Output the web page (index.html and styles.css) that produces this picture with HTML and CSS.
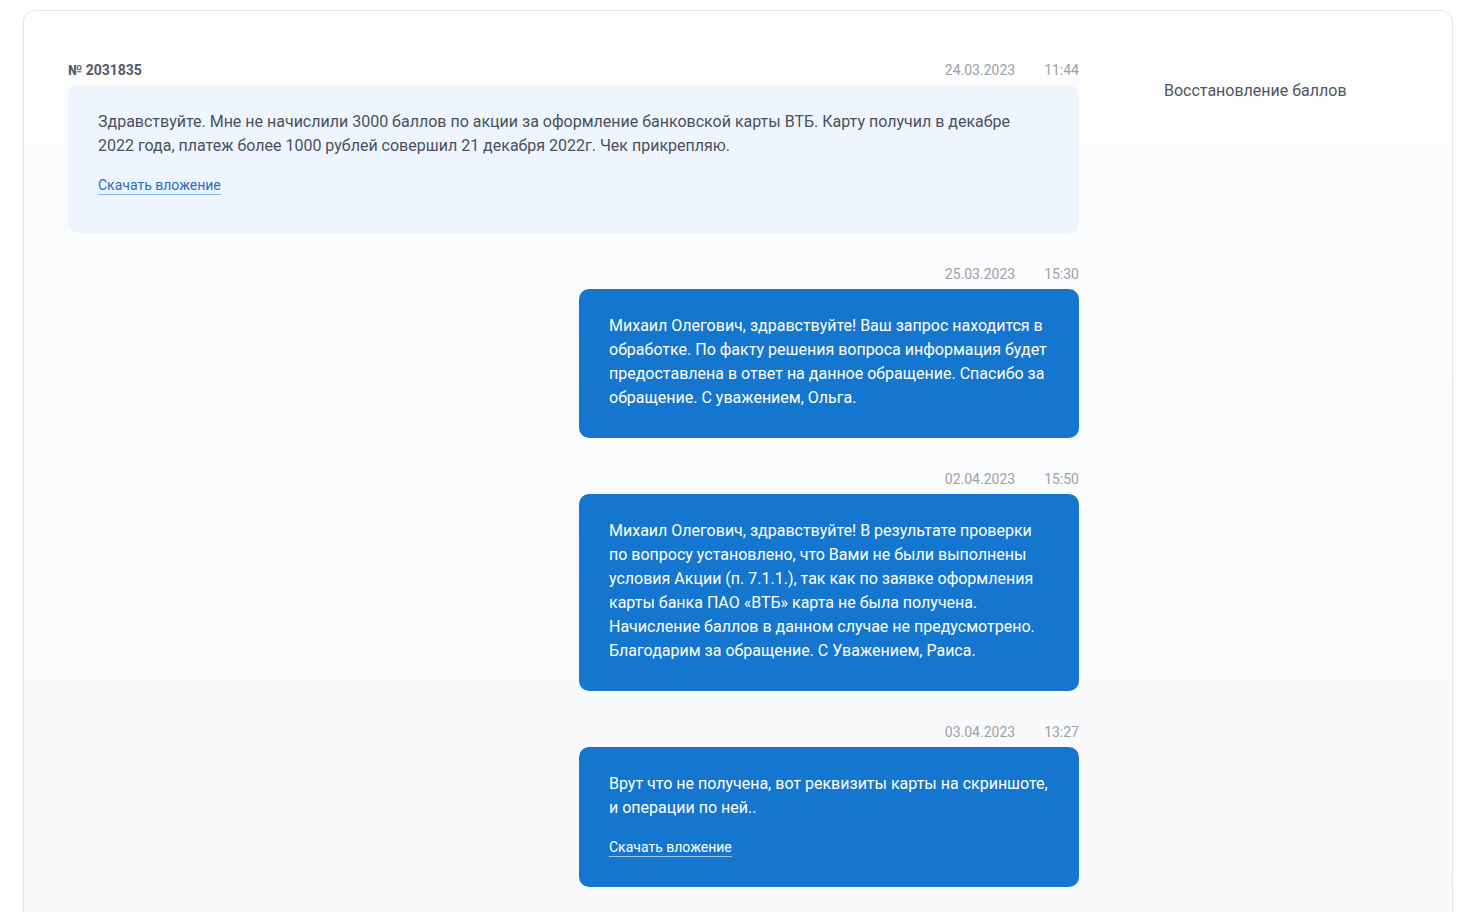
FILE: index.html
```html
<!DOCTYPE html>
<html lang="ru">
<head>
<meta charset="utf-8">
<title>Обращение № 2031835</title>
<link rel="stylesheet" href="styles.css">
</head>
<body>
<div class="card">
  <div class="chat">
    <div class="msg msg-in">
      <div class="meta">
        <span class="num">№ 2031835</span>
        <span class="date">24.03.2023</span>
        <span class="time">11:44</span>
      </div>
      <div class="bubble bubble-light with-attach first">
        <p>Здравствуйте. Мне не начислили 3000 баллов по акции за оформление банковской карты ВТБ. Карту получил в декабре 2022 года, платеж более 1000 рублей совершил 21 декабря 2022г. Чек прикрепляю.</p>
        <div class="attach"><a href="#" class="link">Скачать вложение</a></div>
      </div>
    </div>

    <div class="msg msg-out">
      <div class="meta">
        <span class="date">25.03.2023</span>
        <span class="time">15:30</span>
      </div>
      <div class="bubble bubble-blue">
        <p>Михаил Олегович, здравствуйте! Ваш запрос находится в обработке. По факту решения вопроса информация будет предоставлена в ответ на данное обращение. Спасибо за обращение. С уважением, Ольга.</p>
      </div>
    </div>

    <div class="msg msg-out">
      <div class="meta">
        <span class="date">02.04.2023</span>
        <span class="time">15:50</span>
      </div>
      <div class="bubble bubble-blue">
        <p>Михаил Олегович, здравствуйте! В результате проверки по вопросу установлено, что Вами не были выполнены условия Акции (п. 7.1.1.), так как по заявке оформления карты банка ПАО «ВТБ» карта не была получена. Начисление баллов в данном случае не предусмотрено. Благодарим за обращение. С Уважением, Раиса.</p>
      </div>
    </div>

    <div class="msg msg-out">
      <div class="meta">
        <span class="date">03.04.2023</span>
        <span class="time">13:27</span>
      </div>
      <div class="bubble bubble-blue with-attach">
        <p>Врут что не получена, вот реквизиты карты на скриншоте, и операции по ней..</p>
        <div class="attach"><a href="#" class="link link-white">Скачать вложение</a></div>
      </div>
    </div>
  </div>
  <aside class="side">
    <div class="topic">Восстановление баллов</div>
  </aside>
</div>
</body>
</html>
```

FILE: styles.css
```css
html, body {
  margin: 0;
  padding: 0;
  background: #ffffff;
}
body {
  font-family: Roboto, "Noto Sans", Arial, sans-serif;
  padding: 10px 15px 0 23px;
  height: 912px;
  box-sizing: border-box;
  overflow: hidden;
}
.card {
  display: flex;
  align-items: flex-start;
  gap: 85px;
  border: 1px solid #e3e6ea;
  border-bottom: none;
  border-radius: 12px 12px 0 0;
  background: linear-gradient(#fdfdfe, #f8f9fb);
  padding: 48px 44px 40px 44px;
  min-height: 900px;
  box-sizing: border-box;
}
.chat {
  width: 1011px;
  display: flex;
  flex-direction: column;
  gap: 30px;
}
.msg {
  display: flex;
  flex-direction: column;
}
.msg-out {
  align-items: flex-end;
}
.meta {
  display: flex;
  align-items: center;
  height: 20px;
  padding-top: 1px;
  margin-bottom: 5px;
  font-size: 14px;
  color: #9ca1a8;
  align-self: stretch;
  justify-content: flex-end;
}
.num {
  margin-right: auto;
  font-weight: 700;
  color: #545a66;
}
.time {
  margin-left: 29px;
}
.bubble {
  border-radius: 10px;
  padding: 25px 30px 28px 30px;
  box-sizing: border-box;
}
.bubble p {
  margin: 0;
  font-size: 16px;
  line-height: 24px;
}
.bubble.with-attach {
  padding-bottom: 30px;
}
.bubble.with-attach.first {
  padding-bottom: 38px;
}
.bubble-light {
  align-self: stretch;
  background: #eef5fe;
  color: #4b505c;
}
.bubble-blue {
  width: 500px;
  background: #1476cf;
  color: #ffffff;
}
.attach {
  margin-top: 17px;
  height: 20px;
  line-height: 20px;
}
.link {
  font-size: 14px;
  color: #1c6fc4;
  text-decoration: none;
  border-bottom: 1px solid #7ab8f2;
  padding-bottom: 1px;
}
.link-white {
  color: #ffffff;
  border-bottom-color: rgba(255, 255, 255, 0.6);
}
.side {
  padding-top: 22px;
}
.topic {
  font-size: 16px;
  line-height: 20px;
  color: #50555f;
}
```
